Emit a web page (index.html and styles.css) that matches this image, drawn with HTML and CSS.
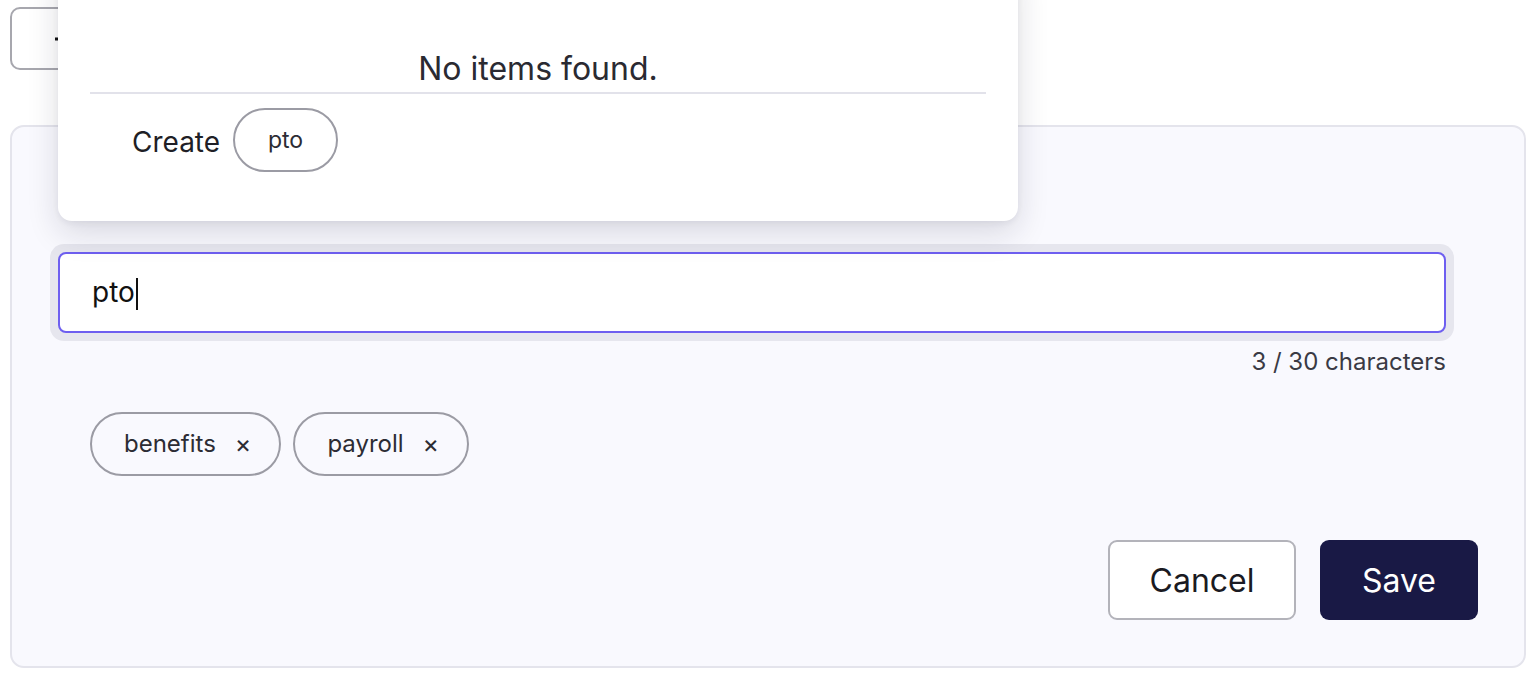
FILE: index.html
```html
<!DOCTYPE html>
<html>
<head>
<meta charset="utf-8">
<link rel="stylesheet" href="styles.css">
</head>
<body>
<div class="page">
  <div class="toolbar">
    <button class="add-btn">
      <svg width="18" height="18" viewBox="0 0 18 18"><path d="M1 9h16M9 1v16" stroke="#111" stroke-width="3" fill="none"/></svg>
      <span>Add tag</span>
    </button>
  </div>
  <div class="card">
    <div class="field">
      <div class="input-ring">
        <div class="input">pto<span class="caret"></span></div>
      </div>
      <div class="counter">3 / 30 characters</div>
    </div>
    <div class="tags">
      <span class="tag">benefits<span class="x">×</span></span>
      <span class="tag">payroll<span class="x">×</span></span>
    </div>
    <div class="actions">
      <button class="btn btn-cancel">Cancel</button>
      <button class="btn btn-save">Save</button>
    </div>
  </div>
  <div class="popover">
    <div class="empty">No items found.</div>
    <div class="divider"></div>
    <div class="create">
      <span>Create</span>
      <span class="pill">pto</span>
    </div>
  </div>
</div>
</body>
</html>
```
FILE: styles.css
```css
* { box-sizing: border-box; }
html, body { margin: 0; background: #fff; }
body {
  font-family: Inter, "Noto Sans", sans-serif;
  color: #1f1f26;
  width: 1536px;
  height: 688px;
  overflow: hidden;
}
.page {
  position: relative;
  padding: 7px 10px 0 10px;
}
.toolbar {
  height: 63px;
  margin-bottom: 55px;
}
.add-btn {
  height: 63px;
  width: 200px;
  border: 2px solid #a7a7ae;
  border-radius: 10px;
  background: #fff;
  display: flex;
  align-items: center;
  gap: 10px;
  padding: 0 0 0 42px;
  font-family: inherit;
  font-size: 26px;
  color: #111;
}
.card {
  width: 1516px;
  height: 543px;
  background: #f9f9fe;
  border: 2px solid #e4e4ec;
  border-radius: 14px;
  padding: 117px 70px 0 38px;
  display: flex;
  flex-direction: column;
}
.field {
  display: flex;
  flex-direction: column;
}
.input-ring {
  width: 1404px;
  height: 97px;
  background: #e6e6ee;
  border-radius: 14px;
  padding: 8px;
}
.input {
  height: 81px;
  background: #fff;
  border: 2px solid #6e5ff0;
  border-radius: 8px;
  padding: 0 0 1px 32px;
  display: flex;
  align-items: center;
  font-size: 28px;
  color: #111;
}
.caret {
  display: inline-block;
  width: 2px;
  height: 32px;
  background: #111;
  margin-left: 1px;
  margin-top: 4px;
}
.counter {
  align-self: flex-start;
  width: 1396px;
  text-align: right;
  font-size: 24px;
  color: #3a3a44;
  margin-top: 6px;
  line-height: 30px;
}
.tags {
  display: flex;
  gap: 12px;
  margin-top: 35px;
  padding-left: 40px;
}
.tag {
  height: 64px;
  border: 2px solid #9b9ba4;
  border-radius: 32px;
  display: inline-flex;
  align-items: center;
  padding: 0 28px 1px 32px;
  font-size: 24px;
  color: #2c2c34;
}
.tag .x {
  margin-left: 19px;
  font-size: 25px;
}
.actions {
  display: flex;
  justify-content: flex-end;
  gap: 24px;
  margin-top: 64px;
  margin-right: -24px;
}
.btn {
  height: 80px;
  border-radius: 9px;
  font-family: inherit;
  font-size: 32px;
  padding: 0;
}
.btn-cancel {
  width: 188px;
  background: #fff;
  border: 2px solid #b3b3ba;
  color: #1a1a22;
}
.btn-save {
  width: 158px;
  background: #191945;
  border: none;
  color: #fff;
}
.popover {
  position: absolute;
  left: 58px;
  top: -40px;
  width: 960px;
  height: 261px;
  background: #fff;
  border-radius: 14px;
  box-shadow: 0 12px 32px rgba(20, 20, 50, 0.14), 0 2px 6px rgba(20,20,50,0.06);
  padding: 0 32px;
  display: flex;
  flex-direction: column;
}
.empty {
  margin-top: 89px;
  text-align: center;
  font-size: 32px;
  line-height: 40px;
  color: #2a2a32;
}
.divider {
  height: 2px;
  background: #e2e2ea;
  margin-top: 3px;
}
.create {
  display: flex;
  align-items: center;
  gap: 13px;
  margin-top: 14px;
  padding-left: 42px;
  font-size: 28px;
  color: #1f1f26;
}
.create > span:first-child {
  padding-top: 4px;
}
.pill {
  width: 105px;
  height: 64px;
  border: 2px solid #9b9ba4;
  border-radius: 32px;
  display: inline-flex;
  align-items: center;
  justify-content: center;
  padding-bottom: 1px;
  font-size: 23px;
  color: #2c2c34;
}
```
